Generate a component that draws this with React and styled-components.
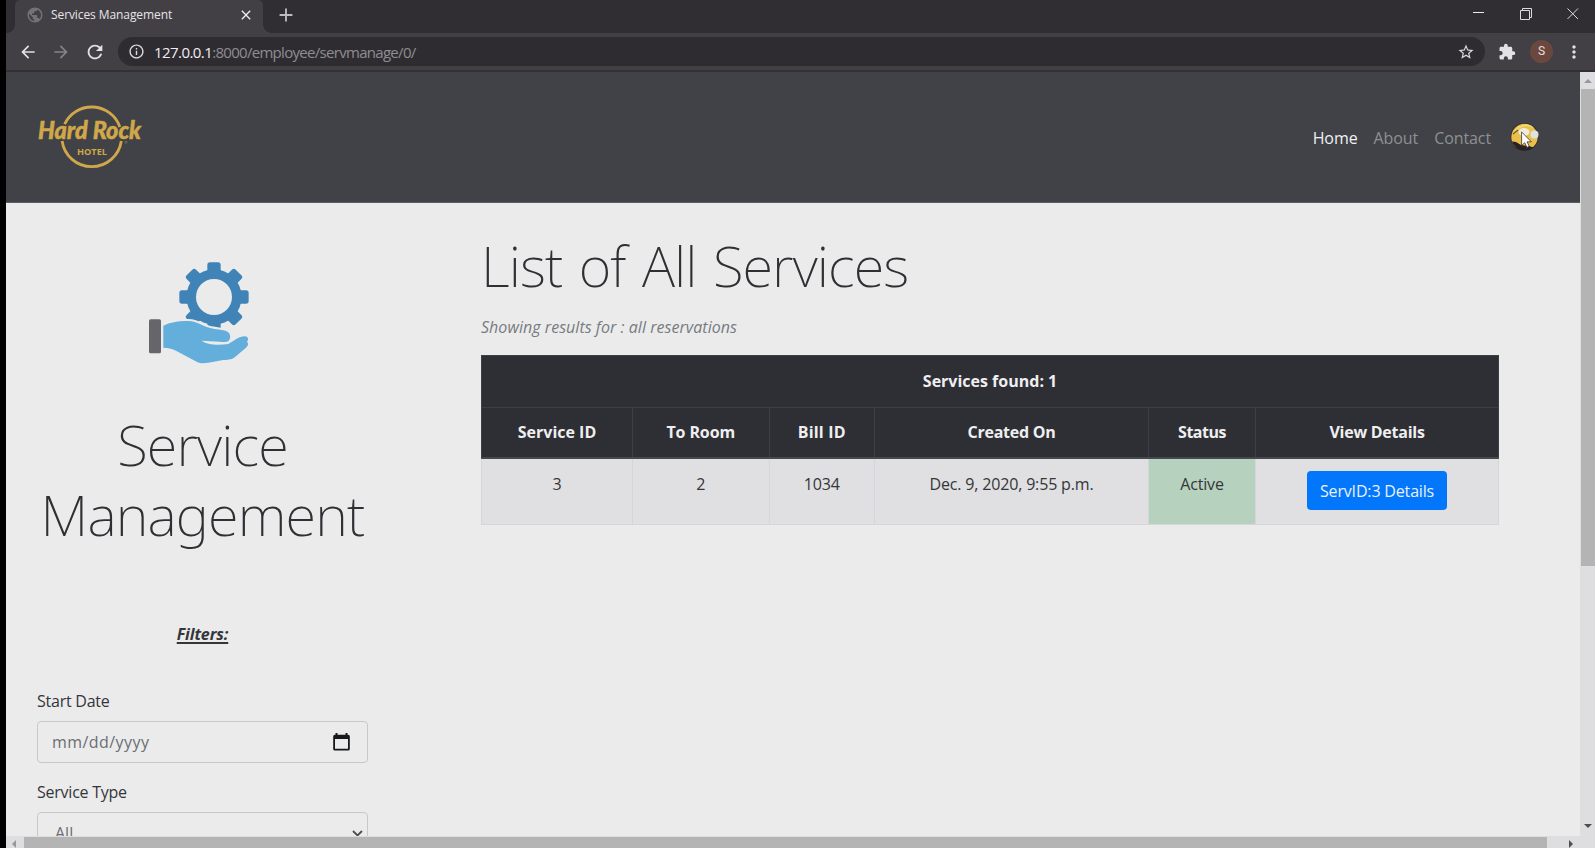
import React from "react";
import styled, { createGlobalStyle } from "styled-components";
import {
  MdAdd,
  MdArrowBack,
  MdArrowForward,
  MdClose,
  MdExtension,
  MdInfoOutline,
  MdMoreVert,
  MdPublic,
  MdRefresh,
  MdStarBorder,
} from "react-icons/md";

const GlobalStyle = createGlobalStyle`
  *, *::before, *::after { box-sizing: border-box; }
  html, body { margin: 0; padding: 0; background: #000; overflow: hidden; }
  body {
    font-family: "Open Sans", "Noto Sans", sans-serif;
    font-size: 16px;
    line-height: 24px;
    color: #34363a;
  }
  svg { display: block; flex: none; }
`;

const Window = styled.div`
  height: 848px;
  width: 1595px;
  padding-left: 6px;
  display: flex;
  flex-direction: column;
  background: #000;
`;

/* Browser chrome */

const TabStrip = styled.header`
  display: flex;
  height: 33px;
  flex: none;
  background: #312e33;
  padding-left: 9px;
`;

const Tab = styled.div`
  position: relative;
  display: flex;
  align-items: center;
  width: 248px;
  height: 33px;
  padding: 0 9px 3px 11px;
  background: #423f45;
  border-radius: 5px 5px 0 0;
  color: #737277;

  &::before, &::after {
    content: "";
    position: absolute;
    bottom: 0;
    width: 8px;
    height: 8px;
  }
  &::before {
    left: -8px;
    background: radial-gradient(circle at 0 0, transparent 7.5px, #423f45 8px);
  }
  &::after {
    right: -8px;
    background: radial-gradient(circle at 100% 0, transparent 7.5px, #423f45 8px);
  }
`;

const TabTitle = styled.span`
  flex: 1;
  margin-left: 7px;
  font-size: 12px;
  letter-spacing: -0.09px;
  color: #e6e4e8;
  white-space: nowrap;
`;

const TabClose = styled.span`
  color: #efedf1;
`;

const NewTab = styled.div`
  padding: 4px 0 0 12px;
  color: #bdbbc0;
`;

const WindowControls = styled.div`
  display: flex;
  gap: 35.5px;
  margin-left: auto;
  padding: 8px 16px 0 0;
`;

const Toolbar = styled.div`
  display: flex;
  align-items: center;
  flex: none;
  height: 39px;
  padding: 0 11px 0 11px;
  background: #423f45;
  border-bottom: 2px solid #333136;
  color: #e3e0e6;
`;

const ToolButton = styled.span`
  display: flex;
  justify-content: center;
  width: ${(p) => p.$width}px;
  color: ${(p) => (p.$dim ? "#858388" : "#e3e0e6")};
`;

const AddressBar = styled.div`
  display: flex;
  align-items: center;
  flex: 1;
  height: 29px;
  margin-left: 11px;
  padding: 0 10px 0 10px;
  border-radius: 15px;
  background: #2e2c31;
  color: #dcd9df;
`;

const Url = styled.span`
  flex: 1;
  margin-left: 9px;
  font-size: 15px;
  letter-spacing: -0.7px;
  color: #8f8d92;
  white-space: nowrap;
`;

const UrlHost = styled.span`
  letter-spacing: -0.57px;
  color: #efedf1;
`;

const ProfileBadge = styled.span`
  display: flex;
  align-items: center;
  justify-content: center;
  width: 23px;
  height: 23px;
  margin: 0 11px 0 1px;
  border-radius: 50%;
  background: #6b483f;
  color: #eadfdc;
  font: 12px/23px Roboto, sans-serif;
`;

/* Page area */

const Viewport = styled.div`
  display: flex;
  flex: 1;
  min-height: 0;
`;

const Page = styled.main`
  display: flex;
  flex-direction: column;
  width: 1574px;
  min-height: 0;
  overflow: hidden;
  background: #ebebec;
`;

const Navbar = styled.nav`
  display: flex;
  align-items: center;
  justify-content: space-between;
  flex: none;
  height: 131px;
  padding: 0 41px 0 29px;
  background: #404247;
  border-bottom: 1px solid #5b5c60;
`;

const NavLinks = styled.div`
  display: flex;
  align-items: center;
`;

const NavLink = styled.a`
  margin-right: ${(p) => p.$gap || 16}px;
  padding-top: 2px;
  letter-spacing: ${(p) => p.$spacing || 0}px;
  color: ${(p) => (p.$active ? "#f1f0f2" : "#8f9094")};
`;

const Content = styled.div`
  display: flex;
  flex: 1;
  min-height: 0;
`;

const Sidebar = styled.aside`
  display: flex;
  flex-direction: column;
  width: 331px;
  margin-left: 31px;
  padding-top: 59px;
`;

const IconSlot = styled.div`
  padding-left: 112px;
`;

const Display = styled.h1`
  margin: 0;
  font-family: "Noto Sans", "Open Sans", sans-serif;
  font-size: 56px;
  font-weight: 200;
  line-height: 70px;
  letter-spacing: ${(p) => p.$spacing}px;
  word-spacing: 2.7px;
  color: #2f3034;
  white-space: nowrap;
`;

const SidebarTitle = styled(Display)`
  margin-top: 45px;
  text-align: center;
`;

const FiltersHeading = styled.div`
  margin: 73px 0 43px;
  text-align: center;
  font-weight: 700;
  font-style: italic;
  letter-spacing: -0.1px;
  text-decoration: underline;
  text-decoration-thickness: 2px;
  text-underline-offset: 2px;
  text-decoration-skip-ink: none;
`;

const Label = styled.label`
  letter-spacing: -0.24px;
`;

const Field = styled.div`
  display: flex;
  align-items: center;
  justify-content: space-between;
  flex: none;
  height: 42px;
  margin: 8px 0 17px;
  padding: ${(p) => p.$padding};
  border: 1px solid #c6c9cc;
  border-radius: 4px;
  color: #6a6e73;
  letter-spacing: ${(p) => p.$spacing || 0}px;
`;

const Results = styled.section`
  width: 1017px;
  margin-left: 113px;
  padding-top: 27px;
`;

const Summary = styled.p`
  margin: 15px 0 16px;
  font-style: italic;
  letter-spacing: 0.04px;
  color: #777b80;
  white-space: nowrap;
`;

const Table = styled.table`
  width: 1017px;
  table-layout: fixed;
  border-collapse: collapse;
  text-align: center;
`;

const HeadCell = styled.th`
  height: ${(p) => p.$height}px;
  padding: 0;
  border: 1px solid #3c3f44;
  border-bottom: ${(p) => (p.$last ? "2px solid #46484c" : "1px solid #3c3f44")};
  background: #2e2f34;
  color: #efeef0;
  font-weight: 700;
  letter-spacing: ${(p) => p.$spacing || 0}px;
`;

const Cell = styled.td`
  height: 66px;
  padding: 13px 0 0;
  border: 1px solid #d5d6da;
  background: ${(p) => (p.$active ? "#b6d2be" : "#e0dfe1")};
  letter-spacing: -0.17px;
  vertical-align: top;
`;

const DetailsButton = styled.button`
  display: block;
  width: 140px;
  height: 39px;
  margin: -1px auto 0;
  padding: 0;
  border: 0;
  border-radius: 4px;
  background: #0377fb;
  color: #e9f1fb;
  font: inherit;
  letter-spacing: -0.17px;
`;

const VerticalScrollbar = styled.div`
  display: flex;
  flex-direction: column;
  justify-content: space-between;
  align-items: center;
  width: 15px;
  padding-bottom: 8px;
  background: #dedee0;
`;

const ScrollTop = styled.div`
  display: flex;
  flex-direction: column;
  align-items: center;
  width: 15px;
  padding-top: 7px;
`;

const VerticalThumb = styled.div`
  width: 14px;
  height: 477px;
  margin: 6px 0 0 1px;
  background: #b4b4b5;
`;

const HorizontalScrollbar = styled.div`
  display: flex;
  align-items: flex-start;
  flex: none;
  height: 12px;
  padding-left: 6px;
  background: #dedee0;
`;

const HorizontalThumb = styled.div`
  width: 1523px;
  height: 11px;
  margin: 1px 22px 0 8px;
  background: #b4b4b5;
`;

const ArrowSlot = styled.span`
  padding-top: 4px;
`;

const Logo = () => (
  <svg width="112" height="80" viewBox="35 97 112 80">
    <g fill="none" stroke="#d0a849" strokeWidth="2.8">
      <path d="M64.600 124.200A29.900 29.900 0 0 1 119.900 127" />
      <path d="M62.100 141A29.900 29.900 0 0 0 121.300 141" />
    </g>
    <text
      x="38"
      y="139"
      textLength="103"
      lengthAdjust="spacingAndGlyphs"
      fontFamily="Lato, sans-serif"
      fontStyle="italic"
      fontWeight="900"
      fontSize="25"
      fill="#d0a849"
      stroke="#d0a849"
      strokeWidth="0.5"
    >
      Hard Rock
    </text>
    <text
      x="77"
      y="155"
      textLength="30"
      lengthAdjust="spacingAndGlyphs"
      fontFamily="Open Sans, sans-serif"
      fontWeight="700"
      fontSize="9.6"
      fill="#d0a849"
    >
      HOTEL
    </text>
    <circle cx="126" cy="142.3" r="1" fill="none" stroke="#8d7a4c" strokeWidth="0.7" />
  </svg>
);

const Avatar = () => (
  <svg width="29" height="32" viewBox="1510 121 29 32">
    <defs>
      <clipPath id="face">
        <circle cx="1524.5" cy="137" r="13.2" />
      </clipPath>
    </defs>
    <circle cx="1524.5" cy="137" r="14" fill="#2c2b2d" />
    <g clipPath="url(#face)">
      <rect x="1510" y="123" width="29" height="24" fill="#e9bf4d" />
      <path d="M1510 141l6 1 5 3 8 1 3 1 7 0v8h-29z" fill="#2b2120" />
      <path d="M1514 133c4-7 12-10 20-6" fill="none" stroke="#f3d775" strokeWidth="2" />
      <ellipse cx="1524" cy="132" rx="5.5" ry="4" fill="#f0ead8" />
      <path d="M1513 134l5-4" stroke="#6a5124" strokeWidth="1.3" />
    </g>
    <circle cx="1534.5" cy="134.5" r="4" fill="#dfe3df" />
    <path
      d="M1521.6 132v13.5l3.1-2.8 2.2 4.7 2.4-1.1-2.2-4.5h4.3z"
      fill="#fff"
      stroke="#38332f"
      strokeWidth="0.8"
    />
  </svg>
);

const ServiceIcon = () => (
  <svg width="100" height="102" viewBox="447 185 300 306">
    <g fill="#4084b7">
      {[0, 45, 90, 135, 180, 225, 270, 315].map((angle) => (
        <rect
          key={angle}
          x="622"
          y="186"
          width="40"
          height="40"
          rx="8"
          transform={`rotate(${angle} 642 290)`}
        />
      ))}
      <circle cx="642" cy="290" r="83" />
    </g>
    <circle cx="642" cy="290" r="54" fill="#ebebec" />
    <path
      d="M490 376C515 364 545 360 575 363C600 368 615 382 640 385L670 390C688 393 695 405 688 419C684 426 675 425 660 424L605 421C620 432 650 436 685 431C705 420 715 408 735 408C746 410 746 418 741 425C747 430 744 437 738 442L705 470C695 478 690 478 670 479L625 487C610 489 602 490 590 484L525 450C515 444 505 443 490 442Z"
      fill="#63aedb"
      stroke="#ebebec"
      strokeWidth="13"
      paintOrder="stroke"
      strokeLinejoin="round"
    />
    <rect x="447" y="357" width="36" height="102" rx="5" fill="#66666a" />
  </svg>
);

const CalendarIcon = () => (
  <svg width="17" height="18" viewBox="0 0 17 18" fill="#17181b">
    <path
      fillRule="evenodd"
      d="M2.5 0h2v1.8h8V0h2v1.8h.7A1.6 1.6 0 0 1 16.8 3.4v12.5a1.6 1.6 0 0 1-1.6 1.6H1.8A1.6 1.6 0 0 1 .2 15.9V3.4A1.6 1.6 0 0 1 1.8 1.8h.7zM2 6v9.8h13V6z"
    />
  </svg>
);

const columns = [
  { label: "Service ID", width: 151, spacing: 0 },
  { label: "To Room", width: 136.5, spacing: -0.11 },
  { label: "Bill ID", width: 105.5, spacing: 0.18 },
  { label: "Created On", width: 274, spacing: -0.27 },
  { label: "Status", width: 107, spacing: -0.5 },
  { label: "View Details", width: 243, spacing: -0.25 },
];

export default function App() {
  return (
    <>
      <GlobalStyle />
      <Window>
        <TabStrip>
          <Tab>
            <MdPublic size={18} />
            <TabTitle>Services Management</TabTitle>
            <TabClose>
              <MdClose size={16} />
            </TabClose>
          </Tab>
          <NewTab>
            <MdAdd size={22} />
          </NewTab>
          <WindowControls>
            <svg width="11" height="12" viewBox="0 0 11 12">
              <path d="M0 4.5h11" stroke="#eceaee" />
            </svg>
            <svg width="12" height="12" viewBox="0 0 12 12" fill="none" stroke="#dcdade">
              <path d="M.5 2.5h9v9h-9zM2.5 2.5v-2h9v9h-2" />
            </svg>
            <svg width="12" height="12" viewBox="0 0 12 12" stroke="#dcdade">
              <path d="M.5.5l10.5 10.5M11 .5L.5 11" />
            </svg>
          </WindowControls>
        </TabStrip>

        <Toolbar>
          <ToolButton $width={22}>
            <MdArrowBack size={20} />
          </ToolButton>
          <ToolButton $width={44} $dim>
            <MdArrowForward size={20} />
          </ToolButton>
          <ToolButton $width={24}>
            <MdRefresh size={22} />
          </ToolButton>
          <AddressBar>
            <MdInfoOutline size={17} />
            <Url>
              <UrlHost>127.0.0.1</UrlHost>:8000/employee/servmanage/0/
            </Url>
            <MdStarBorder size={18} />
          </AddressBar>
          <ToolButton $width={44}>
            <MdExtension size={18} />
          </ToolButton>
          <ProfileBadge>S</ProfileBadge>
          <ToolButton $width={20}>
            <MdMoreVert size={20} />
          </ToolButton>
        </Toolbar>

        <Viewport>
          <Page>
            <Navbar>
              <Logo />
              <NavLinks>
                <NavLink $active $spacing={-0.08}>
                  Home
                </NavLink>
                <NavLink $spacing={-0.08}>About</NavLink>
                <NavLink $spacing={-0.1} $gap={19}>
                  Contact
                </NavLink>
                <Avatar />
              </NavLinks>
            </Navbar>

            <Content>
              <Sidebar>
                <IconSlot>
                  <ServiceIcon />
                </IconSlot>
                <SidebarTitle $spacing={-0.85}>
                  Service
                  <br />
                  Management
                </SidebarTitle>
                <FiltersHeading>Filters:</FiltersHeading>
                <Label>Start Date</Label>
                <Field $padding="0 17px 0 14px" $spacing={0.44}>
                  mm/dd/yyyy
                  <CalendarIcon />
                </Field>
                <Label>Service Type</Label>
                <Field $padding="0 4px 0 17px">
                  All
                  <svg width="11" height="7" viewBox="0 0 11 7" fill="none">
                    <path d="M1 1l4.5 4.5L10 1" stroke="#4b4d51" strokeWidth="1.8" />
                  </svg>
                </Field>
              </Sidebar>

              <Results>
                <Display $spacing={-0.9}>List of All Services</Display>
                <Summary>Showing results for : all reservations</Summary>
                <Table>
                  <colgroup>
                    {columns.map((c) => (
                      <col key={c.label} style={{ width: c.width }} />
                    ))}
                  </colgroup>
                  <thead>
                    <tr>
                      <HeadCell colSpan={6} $height={51.5}>
                        Services found: 1
                      </HeadCell>
                    </tr>
                    <tr>
                      {columns.map((c) => (
                        <HeadCell key={c.label} $height={51} $last $spacing={c.spacing}>
                          {c.label}
                        </HeadCell>
                      ))}
                    </tr>
                  </thead>
                  <tbody>
                    <tr>
                      <Cell>3</Cell>
                      <Cell>2</Cell>
                      <Cell>1034</Cell>
                      <Cell>Dec. 9, 2020, 9:55 p.m.</Cell>
                      <Cell $active>Active</Cell>
                      <Cell>
                        <DetailsButton>ServID:3 Details</DetailsButton>
                      </Cell>
                    </tr>
                  </tbody>
                </Table>
              </Results>
            </Content>
          </Page>

          <VerticalScrollbar>
            <ScrollTop>
              <svg width="8" height="4" viewBox="0 0 8 4">
                <path d="M0 4l4-4 4 4z" fill="#98979a" />
              </svg>
              <VerticalThumb />
            </ScrollTop>
            <svg width="8" height="4" viewBox="0 0 8 4">
              <path d="M0 0h8L4 4z" fill="#4e4e50" />
            </svg>
          </VerticalScrollbar>
        </Viewport>

        <HorizontalScrollbar>
          <ArrowSlot>
            <svg width="4" height="8" viewBox="0 0 4 8">
              <path d="M4 0v8L0 4z" fill="#98979a" />
            </svg>
          </ArrowSlot>
          <HorizontalThumb />
          <ArrowSlot>
            <svg width="4" height="8" viewBox="0 0 4 8">
              <path d="M0 0v8l4-4z" fill="#4e4e50" />
            </svg>
          </ArrowSlot>
        </HorizontalScrollbar>
      </Window>
    </>
  );
}
